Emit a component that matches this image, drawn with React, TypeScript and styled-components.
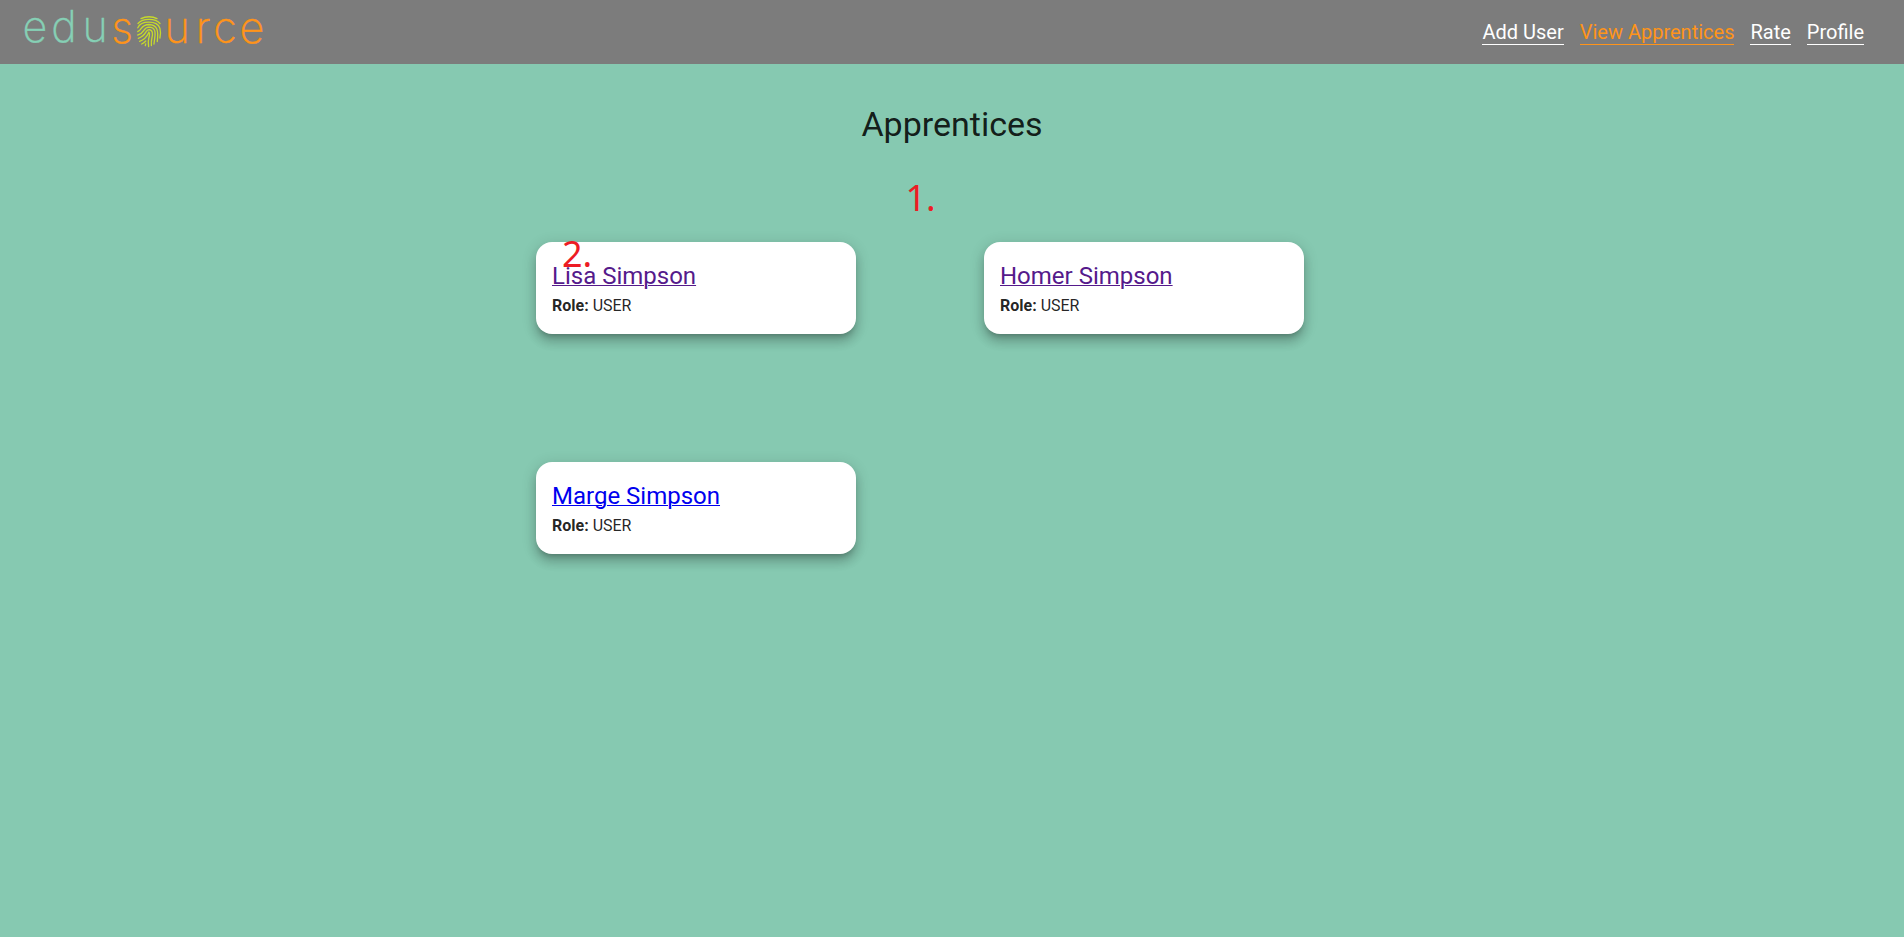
import React from "react";
import styled, { createGlobalStyle } from "styled-components";

const GlobalStyle = createGlobalStyle`
  *, *::before, *::after { box-sizing: border-box; }
  body {
    margin: 0;
    background: #86c9b1;
    color: rgba(0, 0, 0, 0.87);
    font-family: Roboto, "Liberation Sans", sans-serif;
    font-size: 16px;
    line-height: 24px;
  }
`;

const Header = styled.header`
  display: flex;
  align-items: center;
  justify-content: space-between;
  height: 64px;
  padding: 0 40px 0 16px;
  background: #7c7c7c;
`;

const HomeLink = styled.a`
  display: flex;
`;

const LogoImage = styled.svg`
  display: block;
  width: 256px;
  height: 64px;
  font-family: Inter, Lato, sans-serif;
  font-size: 43px;
  font-weight: 200;
`;

const Nav = styled.nav`
  display: flex;
  gap: 16px;
`;

const NavLink = styled.a<{ $active?: boolean }>`
  border-bottom: 1px solid currentColor;
  color: ${({ $active }) => ($active ? "#ff9419" : "#fff")};
  font-size: 20px;
  line-height: 24px;
  text-decoration: none;
`;

const Main = styled.main`
  display: flex;
  flex-direction: column;
  align-items: center;
  padding-top: 40px;
`;

const Title = styled.h1`
  position: relative;
  margin: 0;
  font-size: 34px;
  font-weight: 400;
  line-height: 40px;
`;

const CardList = styled.ul`
  display: flex;
  flex-wrap: wrap;
  gap: 128px;
  width: 100%;
  max-width: 960px;
  margin: 34px 0 0;
  padding: 64px;
  list-style: none;
`;

const Card = styled.li`
  position: relative;
  width: 320px;
  padding: 16px;
  border-radius: 16px;
  background: #fff;
  box-shadow: 0 5px 5px -3px rgba(0, 0, 0, 0.2),
    0 8px 10px 1px rgba(0, 0, 0, 0.14), 0 3px 14px 2px rgba(0, 0, 0, 0.12);
`;

const Name = styled.h2`
  margin: 0;
  font-size: 24px;
  font-weight: 400;
  line-height: 36px;
`;

const NameLink = styled.a<{ $seen?: boolean }>`
  color: ${({ $seen }) => ($seen ? "#551a8b" : "#0000ee")};
  text-decoration-thickness: 1px;
  text-underline-offset: 1px;
  text-decoration-skip-ink: auto;
`;

const Role = styled.p`
  margin: 0;
`;

const Marker = styled.span<{ $left: number; $top: number }>`
  position: absolute;
  left: ${({ $left }) => $left}px;
  top: ${({ $top }) => $top}px;
  color: #ed1c24;
  font-family: "Noto Sans", "Open Sans", sans-serif;
  font-size: 36px;
  line-height: 40px;
  pointer-events: none;
`;

const mint = "#86d0b5";
const orange = "#ff9419";

const logoLetters = [
  { char: "e", x: 35, y: 42, color: mint },
  { char: "d", x: 64, y: 42, color: mint },
  { char: "u", x: 95, y: 42, color: mint },
  { char: "s", x: 122, y: 43, color: orange },
  { char: "u", x: 177, y: 43, color: orange },
  { char: "r", x: 203, y: 43, color: orange },
  { char: "c", x: 225, y: 43, color: orange },
  { char: "e", x: 252, y: 43, color: orange },
];

function Logo() {
  return (
    <LogoImage viewBox="16 0 256 64" role="img" aria-label="edusource">
      {logoLetters.map(({ char, x, y, color }) => (
        <text
          key={x}
          x={x}
          y={y}
          fill={color}
          stroke={color}
          strokeWidth="0.4"
          textAnchor="middle"
        >
          {char}
        </text>
      ))}
      <g
        transform="translate(137 16)"
        fill="none"
        stroke="#c6d92c"
        strokeWidth="1.3"
        strokeLinecap="round"
      >
        <path d="M4 2.600C8.500 .1 15.500 .1 20 2.600" />
        <path d="M1 7.500C5.500 2 18.500 2 23 7.500" />
        <path d="M.8 11.800C4 4.400 20 4.200 22.900 12.200C23.700 15 23.500 19 22.900 22" />
        <path d="M.8 15.500C5 14.500 3.500 8.700 12 8.500C21 8.700 21.400 15.500 20.300 25.500" />
        <path d="M.8 19C8 17.300 5.500 11.300 12 11.100C18.600 11.200 18.600 16.500 17.600 23L17 28" />
        <path d="M1.300 22.300C10 19.500 8 13.800 12 13.600C16.200 13.800 15.800 18.500 14.900 22C14.300 24.500 14.200 27 14.400 29.500" />
        <path d="M2.600 25.300C9.500 22.800 10.600 19 11.900 16.200C13.300 17.500 12.200 20.700 11.600 23C11 25.500 11.200 28 11.600 30.500" />
        <path d="M4.700 28C6.500 27.200 7.800 26.200 8.800 25M8.300 29.700L8.700 28" />
      </g>
    </LogoImage>
  );
}

const navItems = [
  { label: "Add User" },
  { label: "View Apprentices", active: true },
  { label: "Rate" },
  { label: "Profile" },
];

const apprentices = [
  { name: "Lisa Simpson", role: "USER", seen: true, marker: "2." },
  { name: "Homer Simpson", role: "USER", seen: true },
  { name: "Marge Simpson", role: "USER" },
];

export default function App() {
  return (
    <>
      <GlobalStyle />
      <Header>
        <HomeLink href="#home">
          <Logo />
        </HomeLink>
        <Nav>
          {navItems.map(({ label, active }) => (
            <NavLink
              key={label}
              href="#page"
              $active={active}
              aria-current={active ? "page" : undefined}
            >
              {label}
            </NavLink>
          ))}
        </Nav>
      </Header>
      <Main>
        <Title>
          Apprentices
          <Marker $left={44} $top={74}>
            1.
          </Marker>
        </Title>
        <CardList>
          {apprentices.map(({ name, role, seen, marker }) => (
            <Card key={name}>
              <Name>
                <NameLink href="#apprentice" $seen={seen}>
                  {name}
                </NameLink>
              </Name>
              <Role>
                <strong>Role:</strong> {role}
              </Role>
              {marker && (
                <Marker $left={26} $top={-8}>
                  {marker}
                </Marker>
              )}
            </Card>
          ))}
        </CardList>
      </Main>
    </>
  );
}
